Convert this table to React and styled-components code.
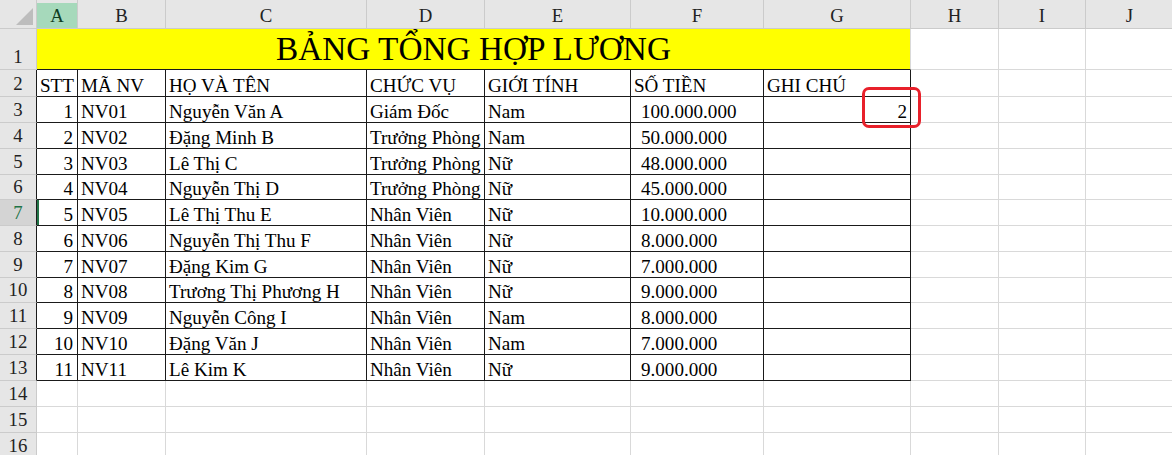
import React from "react";
import styled, { createGlobalStyle } from "styled-components";

const GlobalStyle = createGlobalStyle`
  html, body { margin: 0; padding: 0; background: #ffffff; overflow: hidden; }
  body { font-family: "Liberation Serif", "Times New Roman", serif; color: #000; }
`;

const COLS = [37, 41, 88, 201, 118, 146, 133, 147, 88, 87, 88];
const TEMPLATE = COLS.map((w) => `${w}px`).join(" ");
const GRID = "#d9d9d9";
const BLACK = "#1a1a1a";
const HEAD_BG = "#e6e6e6";
const HEAD_LINE = "#cbcbcb";

const Sheet = styled.div`
  position: relative;
  width: 1172px;
  height: 455px;
  overflow: hidden;
  display: flex;
  flex-direction: column;
`;

const Row = styled.div`
  display: grid;
  grid-template-columns: ${TEMPLATE};
  height: ${(p) => p.$h}px;
  flex: none;
`;

const Corner = styled.div`
  box-sizing: border-box;
  background: ${HEAD_BG};
  border-right: 1px solid ${HEAD_LINE};
  border-bottom: 1px solid ${HEAD_LINE};
  display: flex;
  align-items: flex-end;
  justify-content: flex-end;
  padding: 0 3px 3px 0;
`;

const Triangle = styled.span`
  width: 0;
  height: 0;
  border-left: 17px solid transparent;
  border-bottom: 17px solid #bdbdbd;
`;

const ColHead = styled.div`
  box-sizing: border-box;
  background: ${(p) =>
    p.$selected ? `linear-gradient(${HEAD_BG} 0 3px, #a6d9bb 3px)` : HEAD_BG};
  border-right: 1px solid ${HEAD_LINE};
  border-bottom: 1px solid ${HEAD_LINE};
  display: flex;
  align-items: flex-end;
  justify-content: center;
  padding-bottom: 1px;
  font-size: 18.8px;
  line-height: 1.15;
  color: ${(p) => (p.$selected ? "#0f3d22" : "#222")};
`;

const RowHead = styled.div`
  box-sizing: border-box;
  background: ${(p) => (p.$active ? "#d4d4d4" : HEAD_BG)};
  border-right: 1px solid ${(p) => p.$rc || HEAD_LINE};
  border-bottom: 1px solid ${HEAD_LINE};
  display: flex;
  align-items: flex-end;
  justify-content: center;
  padding-bottom: 1px;
  font-size: 18.8px;
  line-height: 1.15;
  color: ${(p) => (p.$active ? "#217346" : "#222")};
`;

const Cell = styled.div`
  box-sizing: border-box;
  display: flex;
  align-items: flex-end;
  justify-content: ${(p) =>
    p.$align === "right" ? "flex-end" : p.$align === "center" ? "center" : "flex-start"};
  padding: 0 ${(p) => p.$pr ?? 3}px 0 ${(p) => p.$pl ?? 3}px;
  border-right: 1px solid ${(p) => p.$rc || GRID};
  border-bottom: 1px solid ${(p) => p.$bc || GRID};
  background: #fff;
  box-shadow: ${(p) => (p.$active ? "inset 2px 0 0 #217346" : "none")};
  overflow: hidden;
  white-space: nowrap;
  font-size: 19.1px;
  line-height: 1.12;
`;

const TitleCell = styled.div`
  box-sizing: border-box;
  grid-column: 2 / span 7;
  background: #ffff00;
  border-right: 1px solid ${GRID};
  border-bottom: 1px solid ${BLACK};
  display: flex;
  align-items: flex-end;
  justify-content: center;
  padding-bottom: 1px;
  font-size: 33.3px;
  line-height: 1.1;
  white-space: nowrap;
`;

const Annotation = styled.div`
  position: absolute;
  left: 862px;
  top: 87px;
  width: 59px;
  height: 41px;
  box-sizing: border-box;
  border: 3px solid #e8202a;
  border-radius: 7px;
  pointer-events: none;
`;

const LETTERS = ["A", "B", "C", "D", "E", "F", "G", "H", "I", "J"];
const HEIGHTS = [41, 27, 26, 26, 26, 25, 26, 26, 26, 25, 26, 26, 26, 26, 26, 26];

const HEADERS = ["STT", "MÃ NV", "HỌ VÀ TÊN", "CHỨC VỤ", "GIỚI TÍNH", "SỐ TIỀN", "GHI CHÚ"];

const DATA = [
  [1, "NV01", "Nguyễn Văn A", "Giám Đốc", "Nam", "100.000.000", "2"],
  [2, "NV02", "Đặng Minh B", "Trưởng Phòng", "Nam", "50.000.000", ""],
  [3, "NV03", "Lê Thị C", "Trưởng Phòng", "Nữ", "48.000.000", ""],
  [4, "NV04", "Nguyễn Thị D", "Trưởng Phòng", "Nữ", "45.000.000", ""],
  [5, "NV05", "Lê Thị Thu E", "Nhân Viên", "Nữ", "10.000.000", ""],
  [6, "NV06", "Nguyễn Thị Thu F", "Nhân Viên", "Nữ", "8.000.000", ""],
  [7, "NV07", "Đặng Kim G", "Nhân Viên", "Nữ", "7.000.000", ""],
  [8, "NV08", "Trương Thị Phương H", "Nhân Viên", "Nữ", "9.000.000", ""],
  [9, "NV09", "Nguyễn Công I", "Nhân Viên", "Nam", "8.000.000", ""],
  [10, "NV10", "Đặng Văn J", "Nhân Viên", "Nam", "7.000.000", ""],
  [11, "NV11", "Lê Kim K", "Nhân Viên", "Nữ", "9.000.000", ""],
];

function EmptyCells({ count }) {
  return Array.from({ length: count }, (_, i) => <Cell key={`e${i}`} />);
}

export default function App() {
  return (
    <>
      <GlobalStyle />
      <Sheet>
        <Row $h={29}>
          <Corner>
            <Triangle />
          </Corner>
          {LETTERS.map((l) => (
            <ColHead key={l} $selected={l === "A"}>
              {l}
            </ColHead>
          ))}
        </Row>

        <Row $h={HEIGHTS[0]}>
          <RowHead>1</RowHead>
          <TitleCell>BẢNG TỔNG HỢP LƯƠNG</TitleCell>
          <EmptyCells count={3} />
        </Row>

        <Row $h={HEIGHTS[1]}>
          <RowHead $rc={BLACK}>2</RowHead>
          {HEADERS.map((h) => (
            <Cell key={h} $rc={BLACK} $bc={BLACK}>
              {h}
            </Cell>
          ))}
          <EmptyCells count={3} />
        </Row>

        {DATA.map((r, i) => {
          const rowNum = i + 3;
          const active = rowNum === 7;
          return (
            <Row key={rowNum} $h={HEIGHTS[i + 2]}>
              <RowHead $rc={BLACK} $active={active}>
                {rowNum}
              </RowHead>
              <Cell $align="right" $pr={4} $rc={BLACK} $bc={BLACK} $active={active}>
                {r[0]}
              </Cell>
              <Cell $rc={BLACK} $bc={BLACK}>{r[1]}</Cell>
              <Cell $rc={BLACK} $bc={BLACK}>{r[2]}</Cell>
              <Cell $rc={BLACK} $bc={BLACK}>{r[3]}</Cell>
              <Cell $rc={BLACK} $bc={BLACK}>{r[4]}</Cell>
              <Cell $pl={10} $rc={BLACK} $bc={BLACK}>{r[5]}</Cell>
              <Cell $align="right" $pr={3} $rc={BLACK} $bc={BLACK}>{r[6]}</Cell>
              <EmptyCells count={3} />
            </Row>
          );
        })}

        {[14, 15, 16].map((n, i) => (
          <Row key={n} $h={HEIGHTS[13 + i]}>
            <RowHead>{n}</RowHead>
            <EmptyCells count={10} />
          </Row>
        ))}

        <Annotation />
      </Sheet>
    </>
  );
}
